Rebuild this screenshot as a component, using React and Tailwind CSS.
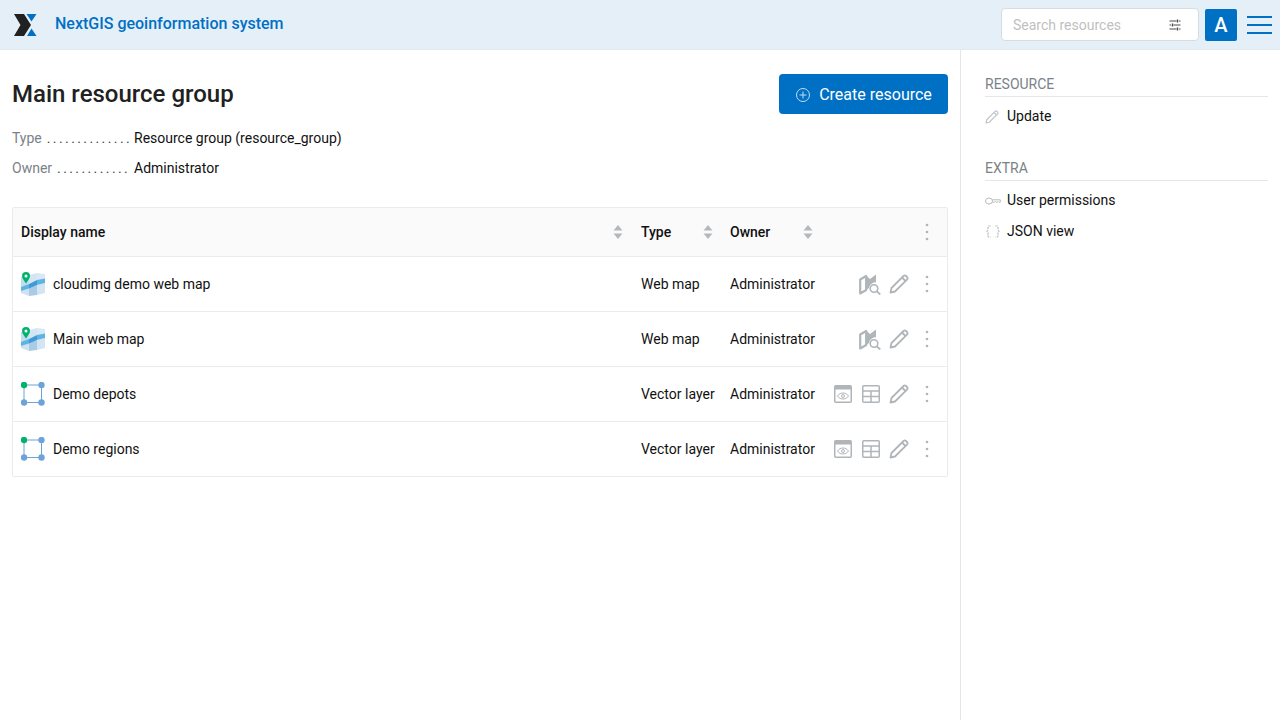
import React from 'react';

const rows = [
  { name: 'cloudimg demo web map', type: 'Web map', kind: 'map' },
  { name: 'Main web map', type: 'Web map', kind: 'map' },
  { name: 'Demo depots', type: 'Vector layer', kind: 'vector' },
  { name: 'Demo regions', type: 'Vector layer', kind: 'vector' },
];

const Logo = () => (
  <svg width="23" height="22" viewBox="0 0 23 22">
    <path d="M0 0h10L17 11 10 22H0l6.500-11z" fill="#212121" />
    <path d="M12.500 0H22.500L17.500 7.500z" fill="#0070c5" />
    <path d="M17.500 14.500 22.500 22H13z" fill="#0070c5" />
  </svg>
);

const MapIcon = () => (
  <svg width="24" height="24" viewBox="0 0 24 24">
    <path d="M0 5l8-2v11l-8 2z" fill="#c4dcef" />
    <path d="M0 18.500l8-2V24l-8-3z" fill="#cfe2f2" />
    <path d="M8 3l8-2v7l-8 4z" fill="#d3e5f3" />
    <path d="M16 1l8 1v5l-8 2z" fill="#d9e8f5" />
    <path d="M16 13l8-2v10l-8 2z" fill="#d3e5f3" />
    <path d="M8 16l8-3v10l-8 1z" fill="#a9cbe6" />
    <path d="M0 15l8-3v4.500l-8 2.500z" fill="#5fb3e3" />
    <path d="M8 12l8-4v5l-8 3.500z" fill="#3f9ad6" />
    <path d="M16 8l8-1.500V11l-8 2z" fill="#5fb3e3" />
    <path d="M5 0a4 4 0 0 1 4 4c0 2.500-2.600 5-4 7.500C3.600 9 1 6.500 1 4a4 4 0 0 1 4-4z" fill="#00b36b" />
    <circle cx="5" cy="4" r="1.500" fill="#fff" />
  </svg>
);

const VectorIcon = () => (
  <svg width="24" height="24" viewBox="0 0 24 24">
    <rect x="3" y="3" width="17.500" height="17.500" fill="none" stroke="#6ca3d9" strokeWidth="1" />
    <circle cx="20.500" cy="3" r="3.200" fill="#6ca3d9" />
    <circle cx="3" cy="20.500" r="3.200" fill="#6ca3d9" />
    <circle cx="20.500" cy="20.500" r="3.200" fill="#6ca3d9" />
    <circle cx="3" cy="3" r="3.200" fill="#00b36b" />
  </svg>
);

const SortIcon = () => (
  <svg width="10" height="16" viewBox="0 0 10 16" className="shrink-0">
    <path d="M5 1l4.500 5.500h-9z" fill="#b5b8ba" />
    <path d="M5 15L.5 9.500h9z" fill="#b5b8ba" />
  </svg>
);

const Dots = () => (
  <svg width="4" height="18" viewBox="0 0 4 18">
    <circle cx="2" cy="2" r="1.300" fill="#b0b5b9" />
    <circle cx="2" cy="9" r="1.300" fill="#b0b5b9" />
    <circle cx="2" cy="16" r="1.300" fill="#b0b5b9" />
  </svg>
);

const Pencil = ({ size = 20, color = '#b0b5b9', width = 1.800 }) => (
  <svg width={size} height={size} viewBox="0 0 20 20" fill="none">
    <path d="M1.500 18.500l1-4.500L14.500 2a1.800 1.800 0 0 1 2.500 0l1 1a1.800 1.800 0 0 1 0 2.500L6 17.500z" stroke={color} strokeWidth={width} strokeLinejoin="round" />
    <path d="M13 3.500L16.500 7" stroke={color} strokeWidth={width} />
  </svg>
);

const MapSearch = () => (
  <svg width="22" height="21" viewBox="0 0 22 21" fill="none">
    <path d="M1.200 5.500V19.500l6-3.500V2z" stroke="#b0b5b9" strokeWidth="2.200" strokeLinejoin="round" />
    <path d="M6.500 1l4.500 4 6-4.500v7.700c-3.500 0-6.500 2.500-7 5.800l-3.500 2.500z" fill="#b0b5b9" />
    <circle cx="15" cy="14.500" r="3.800" stroke="#b0b5b9" strokeWidth="1.600" />
    <path d="M17.800 17.300L21.300 20.500" stroke="#b0b5b9" strokeWidth="1.800" />
  </svg>
);

const Preview = () => (
  <svg width="18" height="18" viewBox="0 0 18 18" fill="none">
    <rect x=".75" y=".75" width="16.500" height="16.500" rx="1" stroke="#b0b5b9" strokeWidth="1.500" />
    <rect x="1" y="1" width="16" height="3.500" fill="#b0b5b9" />
    <path d="M3.500 11C5 8.800 7 8 9 8s4 .8 5.500 3C13 13.200 11 14 9 14s-4-.8-5.500-3z" stroke="#b0b5b9" strokeWidth="1" />
    <circle cx="9" cy="11" r="1.500" stroke="#b0b5b9" strokeWidth="1" />
  </svg>
);

const TableIcon = () => (
  <svg width="18" height="18" viewBox="0 0 18 18" fill="none">
    <rect x=".75" y=".75" width="16.500" height="16.500" rx="1" stroke="#b0b5b9" strokeWidth="1.500" />
    <path d="M1 6h16M1 11.500h16M9 6v11" stroke="#b0b5b9" strokeWidth="1.500" />
  </svg>
);

const PlusCircle = () => (
  <svg width="16" height="16" viewBox="0 0 16 16" fill="none">
    <circle cx="8" cy="8" r="6.500" stroke="#c4def2" strokeWidth="1" />
    <path d="M8 4.500v7M4.500 8h7" stroke="#c4def2" strokeWidth="1" />
  </svg>
);

const FilterIcon = () => (
  <svg width="14" height="14" viewBox="0 0 14 14" fill="none" stroke="#4a4a4a" strokeWidth="1">
    <path d="M1.500 3h7M11 3h1.500M1.500 7H3M5.500 7h7M1.500 11h7M11 11h1.500" />
    <path d="M9.500 1.500v3M4.500 5.500v3M9.500 9.500v3" strokeWidth="1.400" />
  </svg>
);

const KeyIcon = () => (
  <svg width="16" height="8" viewBox="0 0 16 8" fill="none" stroke="#b9bdc0" strokeWidth="1">
    <ellipse cx="4" cy="4" rx="3.500" ry="3" />
    <path d="M7.500 2.800h7.800v2.400h-1.500l-.8-.8-.8.8h-1l-.8-.8-.8.8H7.500" />
  </svg>
);

const BracesIcon = () => (
  <svg width="14" height="13" viewBox="0 0 14 13" fill="none" stroke="#b9bdc0" strokeWidth="1.200" strokeDasharray="2.200 .8">
    <path d="M4.500 1H3a1 1 0 0 0-1 1v3L1 6.500 2 8v3a1 1 0 0 0 1 1h1.500" />
    <path d="M9.500 1H11a1 1 0 0 1 1 1v3l1 1.500L12 8v3a1 1 0 0 1-1 1H9.500" />
  </svg>
);

const App = () => {
  return (
    <div className="h-[720px] flex flex-col bg-white text-[14px] text-[#111] overflow-hidden font-['Roboto',sans-serif]">
      {/* Header */}
      <header className="h-[50px] shrink-0 flex items-center bg-[#e5eff8] border-b border-[#e4e8eb]">
        <div className="ml-[14px] flex items-center">
          <Logo />
        </div>
        <div className="ml-[18px] text-[16px] font-medium text-[#0070c5] relative top-[-1px]">NextGIS geoinformation system</div>
        <div className="ml-auto flex items-center">
          <div className="w-[198px] h-[33px] flex items-center justify-between pl-[11px] pr-[16px] pt-[1px] bg-white border border-[#d8dcdf] rounded-[4px]">
            <span className="text-[#bfbfbf]">Search resources</span>
            <FilterIcon />
          </div>
          <div className="ml-[6px] w-[32px] h-[32px] flex items-center justify-center bg-[#0070c5] rounded-[2px] text-white text-[20px] font-medium">A</div>
          <div className="ml-[10px] mr-[8px] w-[25px] flex flex-col gap-[6px]">
            <div className="h-[2px] bg-[#0070c5]" />
            <div className="h-[2px] bg-[#0070c5]" />
            <div className="h-[2px] bg-[#0070c5]" />
          </div>
        </div>
      </header>

      <div className="flex flex-1 min-h-0">
        {/* Main */}
        <main className="w-[960px] shrink-0 pl-[12px] pr-[12px] pt-[24px]">
          <div className="flex items-center justify-between h-[40px]">
            <h1 className="text-[24px] font-medium text-[#212121]">Main resource group</h1>
            <button className="w-[169px] h-[40px] flex items-center justify-center gap-[8px] pt-[1px] bg-[#0070c5] rounded-[4px] text-white text-[16px]">
              <PlusCircle />
              Create resource
            </button>
          </div>

          <div className="mt-[9px]">
            <div className="flex items-center h-[30px]">
              <div className="w-[122px] flex items-center overflow-hidden whitespace-nowrap">
                <span className="text-[#7a8288]">Type</span>
                <span className="ml-[5px] tracking-[2.400px] text-[#444] [text-rendering:geometricPrecision] relative top-[1px]">..............</span>
              </div>
              <span>Resource group (resource_group)</span>
            </div>
            <div className="flex items-center h-[30px]">
              <div className="w-[122px] flex items-center overflow-hidden whitespace-nowrap">
                <span className="text-[#7a8288]">Owner</span>
                <span className="ml-[5px] tracking-[2.400px] text-[#444] [text-rendering:geometricPrecision] relative top-[1px]">............</span>
              </div>
              <span>Administrator</span>
            </div>
          </div>

          {/* Table */}
          <div className="mt-[24px] border border-[#ebebeb] rounded-[2px]">
            <div className="h-[49px] flex items-center bg-[#fafafa] border-b border-[#ebebeb] font-medium">
              <div className="w-[619px] flex items-center justify-between pl-[8px] pr-[9px]">
                <span>Display name</span>
                <SortIcon />
              </div>
              <div className="w-[89px] flex items-center justify-between pl-[9px] pr-[8px]">
                <span>Type</span>
                <SortIcon />
              </div>
              <div className="w-[100px] flex items-center justify-between pl-[9px] pr-[8px]">
                <span>Owner</span>
                <SortIcon />
              </div>
              <div className="ml-auto mr-[18px] flex">
                <Dots />
              </div>
            </div>
            {rows.map((row, i) => (
              <div key={row.name} className={i < rows.length - 1 ? 'h-[55px] flex items-center border-b border-[#ebebeb]' : 'h-[54px] flex items-center'}>
                <div className="w-[619px] flex items-center gap-[8px] pl-[8px]">
                  {row.kind === 'map' ? <MapIcon /> : <VectorIcon />}
                  <span>{row.name}</span>
                </div>
                <div className="w-[89px] pl-[9px]">{row.type}</div>
                <div className="w-[100px] pl-[9px]">Administrator</div>
                <div className="ml-auto mr-[18px] flex items-center">
                  {row.kind === 'map' ? (
                    <div className="mr-[-1px]"><MapSearch /></div>
                  ) : (
                    <div className="flex items-center gap-[10px]">
                      <Preview />
                      <TableIcon />
                    </div>
                  )}
                  <div className="ml-[9px]"><Pencil /></div>
                  <div className="ml-[16px]"><Dots /></div>
                </div>
              </div>
            ))}
          </div>
        </main>

        {/* Sidebar */}
        <aside className="flex-1 border-l border-[#e6e6e6] pl-[24px] pr-[12px] pt-[26px]">
          <div className="h-[21px] border-b border-[#e6e6e6] text-[#7a8288] leading-[16px]">RESOURCE</div>
          <div className="h-[31px] mt-[4px] flex items-center gap-[8px]">
            <span className="w-[14px] flex justify-center"><Pencil size={14} color="#c2c6c9" width={1.800} /></span>
            <span>Update</span>
          </div>
          <div className="mt-[28px] h-[21px] border-b border-[#e6e6e6] text-[#7a8288] leading-[16px]">EXTRA</div>
          <div className="h-[31px] mt-[4px] flex items-center gap-[6px]">
            <span className="w-[16px] flex justify-center"><KeyIcon /></span>
            <span>User permissions</span>
          </div>
          <div className="h-[31px] flex items-center gap-[6px]">
            <span className="w-[16px] flex justify-center"><BracesIcon /></span>
            <span>JSON view</span>
          </div>
        </aside>
      </div>
    </div>
  );
};

export default App;
